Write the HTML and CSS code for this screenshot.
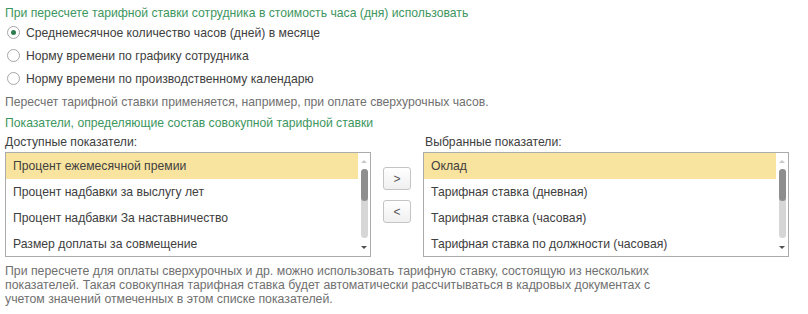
FILE: index.html
```html
<!DOCTYPE html>
<html lang="ru">
<head>
  <meta charset="UTF-8" />
  <title>Пересчет тарифной ставки</title>
  <link rel="stylesheet" href="styles.css">
</head>
<body>

  <!-- Способ пересчета -->
  <div class="group-title">При пересчете тарифной ставки сотрудника в стоимость часа (дня) использовать</div>

  <div class="radio-list">
    <label class="radio-row">
      <span class="radio checked"></span>
      <span>Среднемесячное количество часов (дней) в месяце</span>
    </label>
    <label class="radio-row">
      <span class="radio"></span>
      <span>Норму времени по графику сотрудника</span>
    </label>
    <label class="radio-row">
      <span class="radio"></span>
      <span>Норму времени по производственному календарю</span>
    </label>
  </div>

  <div class="hint">Пересчет тарифной ставки применяется, например, при оплате сверхурочных часов.</div>

  <!-- Показатели -->
  <div class="group-title second">Показатели, определяющие состав совокупной тарифной ставки</div>

  <div class="lists">
    <div class="list-label">Доступные показатели:</div>
    <div></div>
    <div class="list-label right">Выбранные показатели:</div>

    <div class="list-box">
      <ul class="rows">
        <li class="active">Процент ежемесячной премии</li>
        <li>Процент надбавки за выслугу лет</li>
        <li>Процент надбавки За наставничество</li>
        <li>Размер доплаты за совмещение</li>
      </ul>
      <div class="scrollbar">
        <span class="arrow up"></span>
        <div class="track"><div class="thumb"></div></div>
        <span class="arrow down"></span>
      </div>
    </div>

    <div class="buttons">
      <button class="move-btn">&gt;</button>
      <button class="move-btn">&lt;</button>
    </div>

    <div class="list-box">
      <ul class="rows">
        <li class="active">Оклад</li>
        <li>Тарифная ставка (дневная)</li>
        <li>Тарифная ставка (часовая)</li>
        <li>Тарифная ставка по должности (часовая)</li>
      </ul>
      <div class="scrollbar">
        <span class="arrow up"></span>
        <div class="track"><div class="thumb"></div></div>
        <span class="arrow down"></span>
      </div>
    </div>
  </div>

  <div class="note">При пересчете для оплаты сверхурочных и др. можно использовать тарифную ставку, состоящую из нескольких<br>показателей. Такая совокупная тарифная ставка будет автоматически рассчитываться в кадровых документах с<br>учетом значений отмеченных в этом списке показателей.</div>

</body>
</html>
```

FILE: styles.css
```css
body {
  margin: 0;
  padding: 5px 0 0 5px;
  font-family: "Liberation Sans", Arial, sans-serif;
  font-size: 12.2px;
  color: #404040;
  background-color: #ffffff;
}

/* Заголовки групп */
.group-title {
  color: #3d9660;
  line-height: 16px;
}

.group-title.second {
  margin-top: 5px;
}

/* Переключатель */
.radio-list {
  display: flex;
  flex-direction: column;
}

.radio-row {
  height: 23px;
  display: flex;
  align-items: center;
  gap: 6px;
  padding-left: 2px;
}

.radio {
  width: 11px;
  height: 11px;
  border: 1px solid #a6a6a6;
  border-radius: 50%;
  background-color: #ffffff;
  display: flex;
  align-items: center;
  justify-content: center;
}

.radio.checked::after {
  content: "";
  width: 5px;
  height: 5px;
  border-radius: 50%;
  background-color: #2f7d4f;
}

.hint {
  color: #707070;
  line-height: 16px;
  margin-top: 4px;
}

/* Списки показателей */
.lists {
  display: grid;
  grid-template-columns: 366px 52px 366px;
  margin-top: 3px;
}

.list-label {
  line-height: 16px;
  margin-bottom: 2px;
}

.list-label.right {
  padding-left: 2px;
}

.list-box {
  height: 103px;
  border: 1px solid #ababab;
  display: flex;
  overflow: hidden;
}

.rows {
  list-style: none;
  margin: 0;
  padding: 0;
  flex: 1;
}

.rows li {
  height: 26px;
  line-height: 26px;
  padding-left: 7px;
  white-space: nowrap;
}

.rows li.active {
  background-color: #f9e49f;
}

.scrollbar {
  width: 12px;
  display: flex;
  flex-direction: column;
  align-items: center;
  padding: 7px 0 7px;
}

.arrow {
  width: 0;
  height: 0;
  border-left: 3px solid transparent;
  border-right: 3px solid transparent;
}

.arrow.up {
  border-bottom: 3px solid #c8c8c8;
}

.arrow.down {
  border-top: 3px solid #505050;
}

.track {
  flex: 1;
  width: 7px;
  margin: 6px 0 8px;
  background-color: #d6d6d6;
  border-radius: 4px;
}

.thumb {
  height: 32px;
  background-color: #8e8e8e;
  border-radius: 4px;
}

/* Кнопки переноса */
.buttons {
  display: flex;
  flex-direction: column;
  align-items: center;
  gap: 10px;
  padding-top: 15px;
}

.move-btn {
  width: 28px;
  height: 23px;
  padding: 0;
  border: 1px solid #c4c4c4;
  border-radius: 3px;
  background: linear-gradient(#ffffff, #f0f0f0);
  font-family: "Liberation Sans", Arial, sans-serif;
  font-size: 12px;
  color: #555555;
}

.note {
  margin-top: 7px;
  font-size: 12.3px;
  line-height: 14px;
  color: #707070;
}
```
